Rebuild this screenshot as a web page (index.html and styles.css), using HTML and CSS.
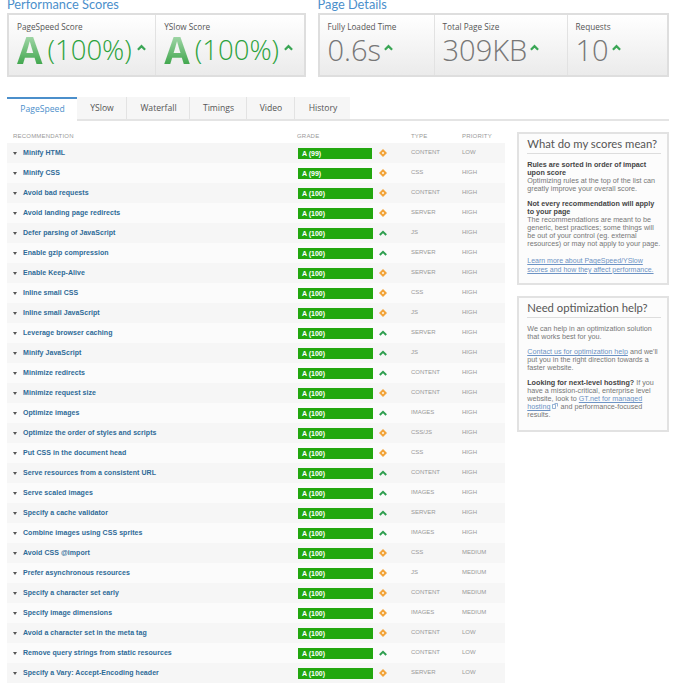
FILE: index.html
```html
<!DOCTYPE html>
<html lang="en">
<head>
<meta charset="utf-8">
<title>Report</title>
<link rel="stylesheet" href="styles.css">
</head>
<body>
<svg class="defs" width="0" height="0" aria-hidden="true">
  <symbol id="up" viewBox="0 0 8 6"><path d="M0.8 5 L4 1.8 L7.2 5" fill="none" stroke="currentColor" stroke-width="2"/></symbol>
  <symbol id="dia" viewBox="0 0 8 8"><path d="M4 0 L8 4 L4 8 L0 4 Z" fill="#f2a33a"/><rect x="3" y="3" width="2" height="2" fill="#fde3b8"/></symbol>
</svg>
<div class="page">
  <div class="summary">
    <section class="sum-left">
      <h2>Performance Scores</h2>
      <div class="box">
        <div class="cell score-cell">
          <div class="label">PageSpeed Score</div>
          <div class="score"><span class="letter">A</span><span class="pct">(100%)</span><svg class="big-up score-up"><use href="#up"/></svg></div>
        </div>
        <div class="cell score-cell">
          <div class="label">YSlow Score</div>
          <div class="score"><span class="letter">A</span><span class="pct">(100%)</span><svg class="big-up score-up"><use href="#up"/></svg></div>
        </div>
      </div>
    </section>
    <section class="sum-right">
      <h2>Page Details</h2>
      <div class="box">
        <div class="cell c-time">
          <div class="label">Fully Loaded Time</div>
          <div class="metric">0.6s<svg class="big-up"><use href="#up"/></svg></div>
        </div>
        <div class="cell c-size">
          <div class="label">Total Page Size</div>
          <div class="metric">309KB<svg class="big-up"><use href="#up"/></svg></div>
        </div>
        <div class="cell c-req">
          <div class="label">Requests</div>
          <div class="metric">10<svg class="big-up"><use href="#up"/></svg></div>
        </div>
      </div>
    </section>
  </div>

  <nav class="tabs">
    <a class="tab active t1">PageSpeed</a>
    <a class="tab t2">YSlow</a>
    <a class="tab t3">Waterfall</a>
    <a class="tab t4">Timings</a>
    <a class="tab t5">Video</a>
    <a class="tab t6">History</a>
  </nav>

  <div class="main">
    <div class="results">
      <div class="row head"><span class="name">RECOMMENDATION</span><span class="grade">GRADE</span><span class="type">TYPE</span><span class="prio">PRIORITY</span></div>
      <div class="list" id="list"></div>
    </div>
    <aside class="side">
      <div class="card c1">
        <h3>What do my scores mean?</h3>
        <p><b>Rules are sorted in order of impact upon score</b><br>Optimizing rules at the top of the list can greatly improve your overall score.</p>
        <p><b>Not every recommendation will apply to your page</b><br>The recommendations are meant to be generic, best practices; some things will be out of your control (eg. external resources) or may not apply to your page.</p>
        <p class="more"><a>Learn more about PageSpeed/YSlow scores and how they affect performance.</a></p>
      </div>
      <div class="card c2">
        <h3>Need optimization help?</h3>
        <p>We can help in an optimization solution that works best for you.</p>
        <p><a>Contact us for optimization help</a> and we'll put you in the right direction towards a faster website.</p>
        <p><b>Looking for next-level hosting?</b> If you have a mission-critical, enterprise level website, look to <a>GT.net for managed hosting</a> <svg class="ext" viewBox="0 0 6 6"><path d="M0.5 1.5H3.5V5.5H0.5Z M2.5 0.5H5.5V3.5" fill="none" stroke="#6d93c4" stroke-width="0.7"/></svg> and performance-focused results.</p>
      </div>
    </aside>
  </div>
</div>
<script src="app.js"></script>
</body>
</html>
```
FILE: styles.css
```css
* { box-sizing: border-box; }
html, body { margin: 0; padding: 0; background: #fff; }
body { width: 679px; height: 692px; overflow: hidden; font-family: "Liberation Sans", Arial, sans-serif; }
.defs { position: absolute; }
.page { padding: 0 10px 0 7px; margin-top: -4px; }

.summary { display: flex; gap: 12px; }
.sum-left { width: 299px; }
.sum-right { width: 352px; }
h2 { margin: 0; height: 17px; font: 400 12.8px/17px Lato, sans-serif; color: #4b8fcb; }
.box { display: flex; height: 64px; border: 2px solid #dedede; background: linear-gradient(#fff, #ebebeb); }
.cell { padding: 6px 0 0 8px; border-right: 1px solid #e2e2e2; }
.cell:last-child { border-right: 0; }
.score-cell { flex: 1 1 50%; }
.c-time { width: 115px; }
.c-size { width: 133px; }
.c-req { flex: 1; }
.label { font: 400 8.2px/11px "Open Sans", sans-serif; color: #555; }
.score { display: flex; align-items: center; height: 30px; margin-top: 3px; color: #2ea83f; }
.letter { font: 700 37px/30px "Open Sans", sans-serif; color: #6cbb76; background: linear-gradient(#a5d8ab, #3fa64c); -webkit-background-clip: text; background-clip: text; -webkit-text-fill-color: transparent; }
.pct { font: 300 27.5px/30px "Open Sans", sans-serif; color: #2ca23c; margin-left: 5px; }
.metric { display: flex; align-items: center; height: 30px; margin-top: 3px; font: 300 29px/30px "Open Sans", sans-serif; color: #777; }
.big-up { width: 9px; height: 7px; margin: 0 0 5px 3px; color: #3aa655; }
.score-up { margin-left: 5px; }

.tabs { display: flex; height: 24px; margin-top: 20px; border-bottom: 2px solid #e4e4e4; width: 662px; }
.tab { height: 22px; padding-left: 1px; font: 400 8.6px/23px "Open Sans", sans-serif; color: #555; background: #f6f6f6; border-right: 1px solid #e3e3e3; text-align: center; }
.tab.active { color: #4b8fcb; background: #fff; border-top: 2px solid #4b8fcb; border-right: 0; line-height: 21px; height: 24px; }
.t1 { width: 70px; } .t2 { width: 50px; } .t3 { width: 63px; } .t4 { width: 57px; } .t5 { width: 48px; } .t6 { width: 55px; border-right: 0; }

.main { display: flex; gap: 12px; margin-top: 8px; align-items: flex-start; }
.results { width: 499px; }
.row { display: flex; height: 20px; font-size: 7px; }
.head { height: 14px; color: #999; font-size: 6px; line-height: 15px; letter-spacing: .2px; }
.head .name { padding-left: 6px; width: 290px; }
.head .grade { width: 114px; }
.head .type { width: 51px; }
.row:nth-child(odd) { background: #f6f6f6; }
.row:nth-child(even) { background: #fbfbfb; }
.head.row { background: none; }
.caret { width: 0; height: 0; margin: 9px 6px 0 6px; border: 2px solid transparent; border-top: 3px solid #555; border-bottom: 0; }
.title { width: 275px; font-weight: 700; color: #2e6a97; line-height: 20px; letter-spacing: .05px; }
.bar-wrap { width: 81px; padding-top: 5px; }
.bar { height: 11px; padding-left: 4px; background: #22a70f; color: #fff; font-weight: 700; font-size: 7px; line-height: 11px; }
.ico { width: 8px; height: 8px; margin: 6px 0 0 0; color: #2f9f50; }
.ico-up { width: 8px; height: 6px; margin-top: 7px; }
.t { margin-left: 24px; width: 51px; color: #999; line-height: 19px; font-size: 6px; }
.p { color: #999; line-height: 19px; font-size: 6px; }

.side { width: 152px; margin-top: 3px; display: flex; flex-direction: column; gap: 11px; }
.card { border: 2px solid #e2e2e2; background: #fcfcfc; padding: 3px 6px 0 8px; font-size: 7.2px; line-height: 8px; color: #777; }
.c1 { height: 153px; }
.c2 { height: 136px; }
h3 { margin: 0 0 7px; padding-bottom: 3px; height: 17px; font: 400 11.3px/14px Lato, sans-serif; color: #555; border-bottom: 1px solid #ddd; white-space: nowrap; }
.card p { margin: 0 0 7px; }
.card .more { margin-top: 9px; font-size: 7px; line-height: 8.5px; }
.card b { color: #444; }
.card a { color: #6d93c4; text-decoration: underline; }
.ext { width: 6px; height: 6px; }
```
FILE: app.js
```js
var rows = [
["Minify HTML",99,"d","CONTENT","LOW"],["Minify CSS",99,"d","CSS","HIGH"],["Avoid bad requests",100,"d","CONTENT","HIGH"],
["Avoid landing page redirects",100,"d","SERVER","HIGH"],["Defer parsing of JavaScript",100,"u","JS","HIGH"],["Enable gzip compression",100,"u","SERVER","HIGH"],
["Enable Keep-Alive",100,"d","SERVER","HIGH"],["Inline small CSS",100,"d","CSS","HIGH"],["Inline small JavaScript",100,"d","JS","HIGH"],
["Leverage browser caching",100,"u","SERVER","HIGH"],["Minify JavaScript",100,"u","JS","HIGH"],["Minimize redirects",100,"u","CONTENT","HIGH"],
["Minimize request size",100,"d","CONTENT","HIGH"],["Optimize images",100,"u","IMAGES","HIGH"],["Optimize the order of styles and scripts",100,"d","CSS/JS","HIGH"],
["Put CSS in the document head",100,"d","CSS","HIGH"],["Serve resources from a consistent URL",100,"u","CONTENT","HIGH"],["Serve scaled images",100,"u","IMAGES","HIGH"],
["Specify a cache validator",100,"u","SERVER","HIGH"],["Combine images using CSS sprites",100,"u","IMAGES","HIGH"],["Avoid CSS @import",100,"d","CSS","MEDIUM"],
["Prefer asynchronous resources",100,"d","JS","MEDIUM"],["Specify a character set early",100,"d","CONTENT","MEDIUM"],["Specify image dimensions",100,"d","IMAGES","MEDIUM"],
["Avoid a character set in the meta tag",100,"d","CONTENT","LOW"],["Remove query strings from static resources",100,"u","CONTENT","LOW"],["Specify a Vary: Accept-Encoding header",100,"d","SERVER","LOW"]];
document.getElementById("list").innerHTML = rows.map(function (r) {
  var icon = r[2] === "u"
    ? '<svg class="ico ico-up"><use href="#up"/></svg>'
    : '<svg class="ico"><use href="#dia"/></svg>';
  return '<div class="row"><i class="caret"></i><span class="title">' + r[0] + '</span>' +
    '<div class="bar-wrap"><div class="bar" style="width:' + (r[1] === 99 ? 74 : 75) + 'px">A (' + r[1] + ')</div></div>' +
    icon + '<span class="t">' + r[3] + '</span><span class="p">' + r[4] + '</span></div>';
}).join("");
```
